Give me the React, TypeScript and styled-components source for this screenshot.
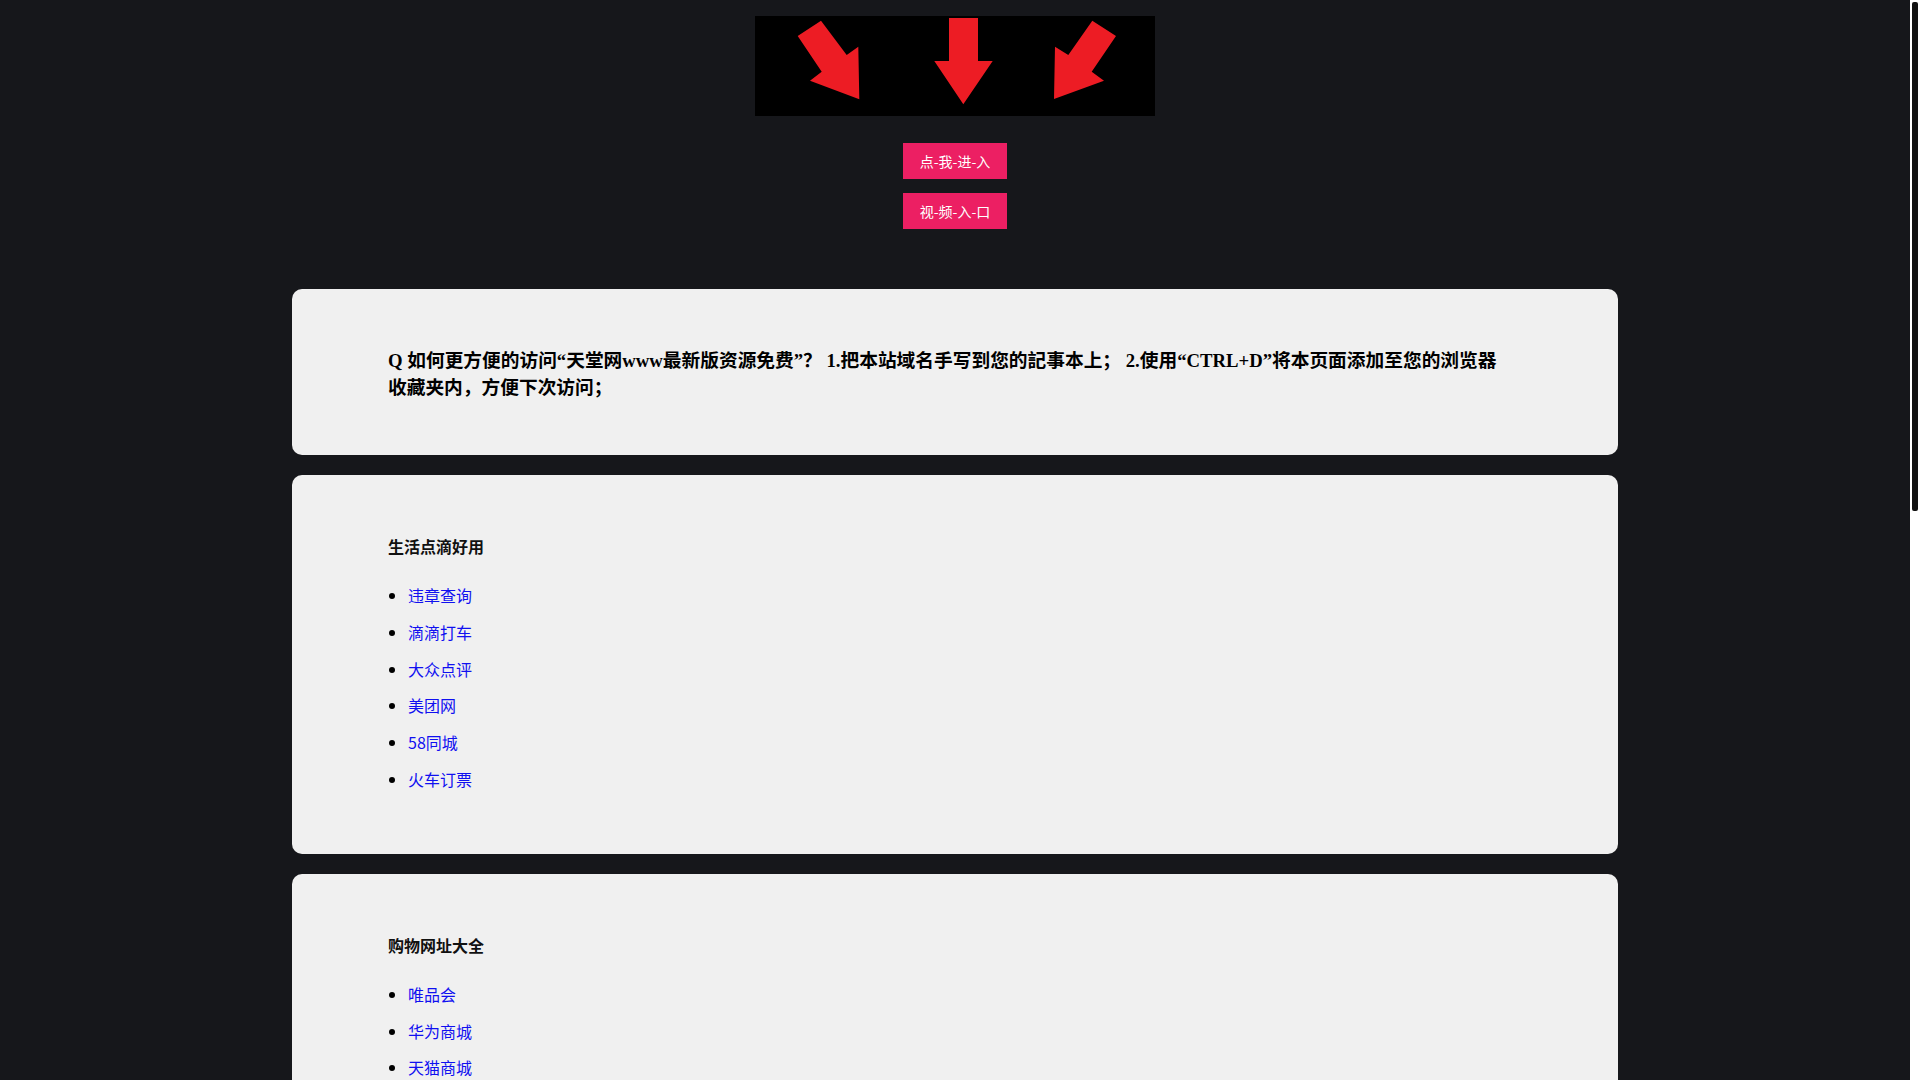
import React from "react";
import styled, { createGlobalStyle } from "styled-components";

const GlobalStyle = createGlobalStyle`
  html, body {
    margin: 0;
    height: 100%;
    overflow: hidden;
    background: #16171b;
  }

  body {
    font-family: "Liberation Serif", "Noto Sans CJK SC", serif;
  }
`;

const Frame = styled.div`
  display: flex;
  height: 100vh;
  overflow: hidden;
`;

const Page = styled.div`
  flex: 1;
  min-width: 0;
  overflow: hidden;
  background: #16171b;
  padding: 8px 0;
`;

// the page's scroll bar: white track, dark thumb
const ScrollTrack = styled.div`
  flex: 0 0 10px;
  background: #ffffff;
`;

const ScrollThumb = styled.div`
  margin: 2px 2px 0;
  height: 509px;
  background: #111111;
  border-radius: 2px;
`;

const Top = styled.div`
  display: flex;
  flex-direction: column;
  align-items: center;
  padding-top: 8px;
  margin-bottom: 60px;
`;

const Banner = styled.div`
  width: 400px;
  height: 100px;
  background: #000;
  margin-bottom: 27px;

  svg {
    display: block;
  }
`;

const EnterButton = styled.a`
  display: block;
  box-sizing: border-box;
  width: 104px;
  height: 36px;
  line-height: 36px;
  text-align: center;
  background: #ec1f63;
  color: #fff;
  font-family: "Noto Sans CJK SC", sans-serif;
  font-size: 14px;
  text-decoration: none;
  margin-bottom: 14px;

  &:last-child {
    margin-bottom: 0;
  }
`;

const Card = styled.section`
  box-sizing: border-box;
  width: 1326px;
  margin: 0 auto 20px;
  padding: 40px 108px 40px 96px;
  background: #f0f0f0;
  border-radius: 10px;
`;

const Question = styled.h3`
  margin: 18px 0 14px;
  font-size: 18.72px;
  line-height: 27px;
  font-weight: bold;
  color: #000;
`;

const Title = styled.h4`
  margin: 20px 0 19px;
  font-family: "Noto Sans CJK SC", sans-serif;
  font-size: 16px;
  font-weight: bold;
  line-height: 23px;
  color: #111;
`;

const LinkList = styled.ul`
  margin: 0 0 16px;
  padding-left: 20px;
  font-family: "Noto Sans CJK SC", sans-serif;
  font-size: 16px;

  li {
    line-height: 36.8px;
    color: #000;
  }

  a {
    color: #1010f0;
    text-decoration: none;
  }
`;

const sections = [
  {
    title: "生活点滴好用",
    links: ["违章查询", "滴滴打车", "大众点评", "美团网", "58同城", "火车订票"],
  },
  {
    title: "购物网址大全",
    links: ["唯品会", "华为商城", "天猫商城", "京东商城", "苏宁易购", "当当网", "亚马逊", "淘宝网", "拼多多", "小米商城"],
  },
  {
    title: "视频影音娱乐",
    links: ["爱奇艺", "腾讯视频", "优酷视频", "芒果TV", "哔哩哔哩", "搜狐视频", "网易云音乐", "QQ音乐", "酷狗音乐", "虎牙直播"],
  },
  {
    title: "新闻资讯门户",
    links: ["新浪新闻", "网易新闻", "腾讯新闻", "凤凰网", "人民网", "新华网"],
  },
];

const Arrows = () => (
  <svg width="400" height="100" viewBox="0 0 400 100">
    <polygon
      fill="#ed1c24"
      points="42.7,20 66,4.7 91.7,39 103.3,30.7 104.3,83.3 55,64.7 66.7,55.7"
    />
    <polygon
      fill="#ed1c24"
      points="194,2 223,2 223,45 237.7,45 208.3,88.3 179.3,45 194,45"
    />
    <polygon
      fill="#ed1c24"
      points="361,20 337.3,4.7 313.3,39 300,30.7 299,83 349,64.7 336.7,55.7"
    />
  </svg>
);

export default function App() {
  return (
    <>
      <GlobalStyle />
      <Frame>
        <Page>
          <Top>
            <Banner>
              <Arrows />
            </Banner>
            <EnterButton href="#">点-我-进-入</EnterButton>
            <EnterButton href="#">视-频-入-口</EnterButton>
          </Top>

          <Card>
            <Question>
              Q 如何更方便的访问“天堂网www最新版资源免费”？ 1.把本站域名手写到您的記事本上； 2.使用“CTRL+D”将本页面添加至您的浏览器收藏夹内，方便下次访问；
            </Question>
          </Card>

          {sections.map((section) => (
            <Card key={section.title}>
              <Title>{section.title}</Title>
              <LinkList>
                {section.links.map((link) => (
                  <li key={link}>
                    <a href="#">{link}</a>
                  </li>
                ))}
              </LinkList>
            </Card>
          ))}
        </Page>
        <ScrollTrack>
          <ScrollThumb />
        </ScrollTrack>
      </Frame>
    </>
  );
}
